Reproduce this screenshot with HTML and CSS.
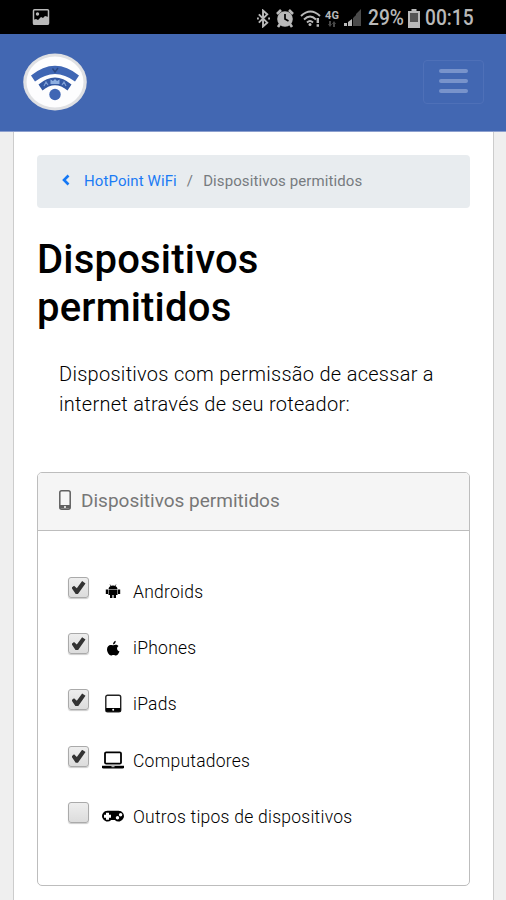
FILE: index.html
```html
<!DOCTYPE html>
<html lang="pt-BR">
<head>
    <meta charset="UTF-8">
    <meta name="viewport" content="width=device-width, initial-scale=1.0">
    <title>HotPoint WiFi - Dispositivos permitidos</title>
    <link rel="stylesheet" href="styles.css">
</head>
<body>
    <!-- Status bar -->
    <div class="status-bar">
        <svg class="status-picture" width="18" height="17" viewBox="0 0 18 17">
            <rect x="1.500" y=".8" width="15" height="14.500" rx="1" fill="none" stroke="#b9b9b9" stroke-width="1.500"/>
            <path d="M1 11l3-1 2 1 3-3 2 1 2-2 3.500 1v7.500H1z" fill="#b9b9b9"/>
            <circle cx="5.500" cy="5" r="1.700" fill="#b9b9b9"/>
        </svg>
        <div class="status-right">
            <svg class="icon-bluetooth" width="13" height="19" viewBox="0 0 14 19" fill="none" stroke="#b9b9b9" stroke-width="2.1">
                <path d="M2 5l9 9-4.5 4V1L11 5l-9 9"/>
                <path d="M0 9.5h2M12 9.5h2"/>
            </svg>
            <svg class="icon-alarm" width="18" height="19" viewBox="0 0 18 19">
                <path d="M1 5l4-4M17 5l-4-4M4 15l-2 3M14 15l2 3" stroke="#b9b9b9" stroke-width="2.6"/>
                <circle cx="9" cy="10" r="7.8" fill="#b9b9b9"/>
                <path d="M9 5v5l3.5 2" fill="none" stroke="#000" stroke-width="1.7"/>
            </svg>
            <svg class="icon-wifi" width="21" height="17" viewBox="0 0 21 17" fill="none" stroke="#b9b9b9" stroke-width="1.9">
                <path d="M1 6q9.500-9 19 0M4 9.500q6-6 12 0M7 12.500q3-3 6 0"/>
                <circle cx="10" cy="14.500" r="1.500" fill="#b9b9b9" stroke="none"/>
                <path d="M17.800 8v5M17.800 14.300v2.400" stroke-width="2.400"/>
            </svg>
            <div class="network">
                <span>4G</span>
                <svg width="10" height="6" viewBox="0 0 10 6" fill="#484848">
                    <path d="M2 0h2v3h1L3 6 1 3h1zM6 6h2V3h1L7 0 5 3h1z"/>
                </svg>
            </div>
            <svg class="icon-signal" width="18" height="18" viewBox="0 0 18 18">
                <path d="M0 17h3v-3H0zM4 17h4V10l-4 3z" fill="#b9b9b9"/>
                <path d="M9 17h3V6L9 9zM12 17h5V0l-5 5z" fill="#4a4a4a"/>
            </svg>
            <span class="battery-text">29%</span>
            <svg class="icon-battery" width="12" height="19" viewBox="0 0 12 19">
                <path d="M3.500 0h5v2H12v17H0V2h3.500z" fill="#b9b9b9"/>
                <rect x="2" y="4" width="8" height="9" fill="#555"/>
            </svg>
            <span class="clock">00:15</span>
        </div>
    </div>

    <!-- Navbar -->
    <nav class="navbar">
        <a class="brand" href="#" aria-label="HotPoint WiFi">
            <svg width="66" height="60" viewBox="0 0 66 60">
                <ellipse cx="33" cy="30" rx="31.800" ry="28.400" fill="#dfe0e3"/>
                <ellipse cx="33" cy="30" rx="28.500" ry="25.500" fill="#fdfdfe"/>
                <path d="M9 23.500Q33 4 57 23.500L53 29.500Q33 14.500 13 29.500z" fill="#3f66b4"/>
                <path d="M16.500 32.500Q33 18.500 49.500 32.500L45.500 38.500Q33 28 20.500 38.500z" fill="#3459a4"/>
                <path d="M22 34l2-4 2 3M40 33l2-3 2 4" fill="none" stroke="#7f9fd6" stroke-width="1.200"/>
                <path d="M30.500 16.500l2.500 3.500 3-4" fill="none" stroke="#2a4781" stroke-width="1.400"/>
                <path d="M28.500 32v-4.500l2.500 1.500 2-2 2 2 2.500-1.500V32z" fill="#8fb0e2"/>
                <circle cx="33" cy="42.500" r="5.700" fill="#3f66b4"/>
            </svg>
        </a>
        <button class="navbar-toggler" aria-label="Menu">
            <span></span>
            <span></span>
            <span></span>
        </button>
    </nav>

    <main class="container">
        <div class="breadcrumb">
            <svg width="8" height="12" viewBox="0 0 8 12">
                <path d="M6.500 1.500L2 6l4.500 4.500" fill="none" stroke="#1478f5" stroke-width="2.600"/>
            </svg>
            <a href="#">HotPoint WiFi</a>
            <span class="separator">/</span>
            <span class="active">Dispositivos permitidos</span>
        </div>

        <h1>Dispositivos permitidos</h1>
        <p class="lead">Dispositivos com permissão de acessar a internet através de seu roteador:</p>

        <div class="card">
            <div class="card-header">
                <svg width="12" height="20" viewBox="0 0 12 20">
                    <rect x=".8" y=".8" width="10.400" height="18.400" rx="1.800" fill="none" stroke="#606060" stroke-width="1.500"/>
                    <path d="M1 15h10v3.500H1z" fill="#606060"/>
                    <circle cx="6" cy="16.900" r="1" fill="#fff"/>
                </svg>
                <span>Dispositivos permitidos</span>
            </div>
            <div class="card-body">
                <div class="device">
                    <input type="checkbox" id="androids" checked>
                    <svg class="device-icon" width="24" height="20" viewBox="0 0 24 20">
                        <path d="M7.500 7Q8 3.500 12 3.500T16.500 7zM7.500 7.500h9v5.500h-9zM4.800 7.500h2.200v4.500H4.800zM17 7.500h2.200v4.500H17zM9 13h2.400v3H9zM12.600 13H15v3h-2.400z"/>
                        <path d="M9 2.500l1 2M15 2.500l-1 2" stroke="#000" stroke-width=".6"/>
                    </svg>
                    <label for="androids">Androids</label>
                </div>
                <div class="device">
                    <input type="checkbox" id="iphones" checked>
                    <svg class="device-icon" width="24" height="20" viewBox="0 0 24 20">
                        <path d="M12 6.600Q12 3.500 14.700 2.700 14.900 5.600 12 6.600zM12 7.300c1.300 0 3.500-1.600 5.500.7-2.300 1.500-1.700 4.500 1 5.400-1 2.500-2.600 4.500-4.300 4-1.600-.6-2.100-.5-3.600 0C8.500 18 6 14.500 6 11.500c0-3.600 2.500-5 4.300-4.500z"/>
                    </svg>
                    <label for="iphones">iPhones</label>
                </div>
                <div class="device">
                    <input type="checkbox" id="ipads" checked>
                    <svg class="device-icon" width="24" height="20" viewBox="0 0 24 20">
                        <rect x="4.800" y="1.300" width="14.900" height="16.400" rx="1.800" fill="none" stroke="#222" stroke-width="1.400"/>
                        <path d="M5 14h14.500v3.500H5z"/>
                        <circle cx="12.200" cy="15.800" r="1" fill="#fff"/>
                    </svg>
                    <label for="ipads">iPads</label>
                </div>
                <div class="device">
                    <input type="checkbox" id="computers" checked>
                    <svg class="device-icon" width="24" height="20" viewBox="0 0 24 20">
                        <rect x="4" y="1.400" width="16" height="11.200" rx="1.200" fill="none" stroke="#000" stroke-width="1.800"/>
                        <path d="M1 14.700h22v1.500q0 1.300-1.500 1.300h-19Q1 17.500 1 16.200z"/>
                        <path d="M10.500 15.700h3" stroke="#fff" stroke-width=".8"/>
                    </svg>
                    <label for="computers">Computadores</label>
                </div>
                <div class="device">
                    <input type="checkbox" id="others">
                    <svg class="device-icon" width="24" height="20" viewBox="0 0 24 20">
                        <path d="M6.500 3.700h11a5.400 5.400 0 1 1-3.700 9.300h-3.600A5.400 5.400 0 1 1 6.500 3.700z"/>
                        <path d="M3 9.200h7M6.500 5.700v7" stroke="#fff" stroke-width="3"/>
                        <circle cx="16.500" cy="10.800" r="1.700" fill="#fff"/>
                        <circle cx="19.600" cy="7.700" r="1.700" fill="#fff"/>
                    </svg>
                    <label for="others">Outros tipos de dispositivos</label>
                </div>
            </div>
        </div>
    </main>
</body>
</html>
```

FILE: styles.css
```css
* {
    box-sizing: border-box;
}

body {
    margin: 0;
    height: 900px;
    overflow: hidden;
    display: flex;
    flex-direction: column;
    font-family: Roboto, sans-serif;
    color: #000;
    background-color: #efefef;
}

svg {
    display: block;
    flex-shrink: 0;
}

/* Status bar */
.status-bar {
    flex: none;
    height: 34px;
    display: flex;
    align-items: center;
    justify-content: space-between;
    padding: 2px 32px 0;
    background-color: #000;
    color: #b9b9b9;
}

.status-picture {
    margin-top: -2px;
}

.status-right {
    display: flex;
    align-items: center;
}

.icon-alarm {
    margin-left: 6px;
}

.icon-wifi {
    margin-left: 6px;
}

.network {
    width: 14px;
    margin-left: 4px;
    display: flex;
    flex-direction: column;
    align-items: center;
    font-size: 11px;
    font-weight: 700;
    line-height: 11px;
}

.icon-signal {
    margin-left: 5px;
}

.battery-text,
.clock {
    font-size: 22px;
    line-height: 30px;
    transform: scaleX(0.87);
    transform-origin: left;
    white-space: nowrap;
    font-weight: 500;
}

.battery-text {
    width: 35px;
    margin-left: 6px;
}

.icon-battery {
    margin-left: 5px;
}

.clock {
    width: 49px;
    margin-left: 5px;
}

/* Navbar */
.navbar {
    flex: none;
    height: 98px;
    display: flex;
    align-items: center;
    justify-content: space-between;
    padding: 0 22px 2px;
    background-color: #4267b2;
    border-bottom: 1px solid #8c9fce;
}

.navbar-toggler {
    width: 61px;
    height: 44px;
    display: flex;
    flex-direction: column;
    align-items: center;
    justify-content: center;
    gap: 6px;
    padding: 0 0 1px;
    background: none;
    border: 1px solid #4e70b8;
    border-radius: 4px;
}

.navbar-toggler span {
    width: 29px;
    height: 4px;
    border-radius: 2px;
    background-color: #7893cb;
}

/* Page content */
.container {
    flex: 1;
    margin: 0 12px 0 13px;
    padding: 23px 23px 0;
    background-color: #fff;
    border-left: 1px solid #ccc;
    border-right: 1px solid #ccc;
}

.breadcrumb {
    height: 53px;
    display: flex;
    align-items: center;
    padding: 0 25px 1px;
    border-radius: 4px;
    background-color: #e8ecef;
    font-size: 15px;
    letter-spacing: 0.1px;
    color: #777b7f;
}

.breadcrumb svg {
    margin-top: -2px;
}

.breadcrumb a {
    margin-left: 14px;
    color: #1b7bf5;
    text-decoration: none;
}

.separator {
    margin: 0 10px;
}

h1 {
    margin: 28px 0 0;
    max-width: 300px;
    font-size: 40px;
    font-weight: 500;
    line-height: 48px;
    letter-spacing: 0.2px;
    color: #000;
}

.lead {
    margin: 28px 22px 0;
    font-size: 20px;
    font-weight: 300;
    line-height: 29.500px;
    letter-spacing: 0.280px;
}

/* Device card */
.card {
    height: 414px;
    margin-top: 53px;
    border: 1px solid #bdbdbd;
    border-radius: 5px;
}

.card-header {
    height: 58px;
    display: flex;
    align-items: center;
    gap: 10px;
    padding: 0 21px 3px;
    background-color: #f5f5f5;
    border-bottom: 1px solid #bdbdbd;
    border-radius: 4px 4px 0 0;
    font-size: 19px;
    color: #777;
}

.card-body {
    padding: 33px 30px;
}

.device {
    height: 56.200px;
    display: flex;
    align-items: center;
    font-size: 17.500px;
    font-weight: 300;
    letter-spacing: 0.250px;
}

.device input {
    appearance: none;
    width: 21px;
    height: 21px;
    margin: -9px 0 0;
    display: grid;
    place-items: center;
    border: 1px solid #aaa;
    border-radius: 3px;
    background: linear-gradient(#eee, #dcdcdc);
    box-shadow: 0 1px 1px #ccc;
}

/* Check mark */
.device input:checked::before {
    content: "";
    width: 14px;
    height: 13px;
    background-color: #333;
    clip-path: polygon(0 52%, 18% 36%, 38% 56%, 76% 0, 100% 18%, 46% 100%, 30% 100%);
}

.device-icon {
    margin-left: 12px;
    fill: #000;
}

.device label {
    margin-left: 8px;
}
```
